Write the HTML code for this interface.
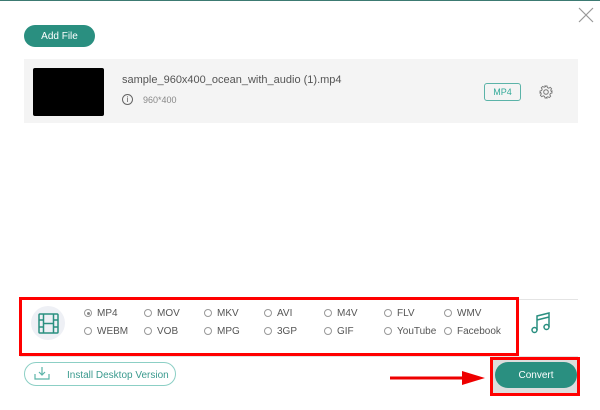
<!DOCTYPE html>
<html><head><style>
body{margin:0;width:600px;height:410px;background:#fff;position:relative;overflow:hidden;font-family:"Liberation Sans",sans-serif;}
.a{position:absolute}
.btn{display:flex;align-items:center;justify-content:center}
.r{position:absolute;font-size:10px;color:#555;}
.r i{display:inline-block;width:8px;height:8px;border:1px solid #999;border-radius:50%;vertical-align:-1px;margin-right:5px;box-sizing:border-box;position:relative}
.r i.on::after{content:"";position:absolute;left:1.5px;top:1.5px;width:3px;height:3px;border-radius:50%;background:#888}
</style></head><body>
<div class="a" style="left:0;top:0;width:600px;height:1px;background:#3c7a72"></div>
<svg class="a" style="left:578px;top:7px" width="16" height="16"><path d="M1 1L15 15M15 1L1 15" stroke="#999" stroke-width="1.2"/></svg>
<div class="a btn" style="left:24px;top:25px;width:71px;height:22px;border-radius:11px;background:#2a8f80;color:#fff;font-size:10px">Add File</div>
<div class="a" style="left:24px;top:59px;width:554px;height:64px;background:#f4f4f4"></div>
<div class="a" style="left:33px;top:68px;width:71px;height:48px;background:#000;border-radius:2px"></div>
<div class="a" style="left:122px;top:74px;font-size:11px;color:#555">sample_960x400_ocean_with_audio (1).mp4</div>
<div class="a" style="left:122px;top:94px;width:9px;height:9px;border:1px solid #666;border-radius:50%;font-size:8px;line-height:9px;text-align:center;color:#555">i</div>
<div class="a" style="left:143px;top:95px;font-size:9px;color:#888">960*400</div>
<div class="a btn" style="left:484px;top:83px;width:37px;height:18px;border:1px solid #5bb3a8;border-radius:3px;box-sizing:border-box;font-size:9px;color:#3a9">MP4</div>
<svg class="a" style="left:539px;top:85px" width="14" height="14" viewBox="0 0 14 14"><circle cx="7" cy="7" r="2.3" fill="none" stroke="#777"/><path d="M6 1h2l.4 1.6 1.4.6 1.4-.9 1.4 1.4-.9 1.4.6 1.4L13 6v2l-1.6.4-.6 1.4.9 1.4-1.4 1.4-1.4-.9-1.4.6L8 13H6l-.4-1.6-1.4-.6-1.4.9-1.4-1.4.9-1.4-.6-1.4L1 8V6l1.6-.4.6-1.4-.9-1.4 1.4-1.4 1.4.9 1.4-.6z" fill="none" stroke="#777" stroke-width=".9"/></svg>
<div class="a" style="left:20px;top:299px;width:558px;height:1px;background:#e4e4e4"></div>
<div class="a" style="left:20px;top:356px;width:558px;height:1px;background:#e4e4e4"></div>
<div class="a" style="left:31px;top:306px;width:34px;height:34px;border-radius:50%;background:#eef0f5"></div>
<svg class="a" style="left:38px;top:313px" width="21" height="21" viewBox="0 0 21 21"><g fill="none" stroke="#2a8f80" stroke-width="1.5"><rect x="1" y="1" width="19" height="19" rx="1"/><path d="M5.5 1v19M15.5 1v19M1 7h4.5M1 14h4.5M15.5 7H20M15.5 14H20M5.5 10.5h10"/></g></svg>
<div class="a" style="left:19px;top:297px;width:494px;height:53px;border:3px solid #f00"></div>
<div class="r" style="left:84px;top:308px"><i class="on"></i>MP4</div>
<div class="r" style="left:144px;top:308px"><i></i>MOV</div>
<div class="r" style="left:204px;top:308px"><i></i>MKV</div>
<div class="r" style="left:264px;top:308px"><i></i>AVI</div>
<div class="r" style="left:324px;top:308px"><i></i>M4V</div>
<div class="r" style="left:384px;top:308px"><i></i>FLV</div>
<div class="r" style="left:444px;top:308px"><i></i>WMV</div>
<div class="r" style="left:84px;top:326px"><i></i>WEBM</div>
<div class="r" style="left:144px;top:326px"><i></i>VOB</div>
<div class="r" style="left:204px;top:326px"><i></i>MPG</div>
<div class="r" style="left:264px;top:326px"><i></i>3GP</div>
<div class="r" style="left:324px;top:326px"><i></i>GIF</div>
<div class="r" style="left:384px;top:326px"><i></i>YouTube</div>
<div class="r" style="left:444px;top:326px"><i></i>Facebook</div>
<svg class="a" style="left:531px;top:312px" width="20" height="22" viewBox="0 0 20 22"><g fill="none" stroke="#2a8f80" stroke-width="1.5"><path d="M6 18V4l12-3v14M6 8l12-3"/><circle cx="3.5" cy="18" r="2.5"/><circle cx="15.5" cy="15" r="2.5"/></g></svg>
<div class="a" style="left:24px;top:362px;width:152px;height:24px;border:1px solid #8ccfc5;border-radius:12px;box-sizing:border-box"></div>
<svg class="a" style="left:34px;top:366px" width="16" height="14" viewBox="0 0 16 14"><g fill="none" stroke="#5bb3a8" stroke-width="1.2"><path d="M8 1v8M5 6l3 3 3-3M1 8v5h14V8"/></g></svg>
<div class="a" style="left:67px;top:369px;font-size:10px;color:#3a9a8e;margin-top:1px">Install Desktop Version</div>
<svg class="a" style="left:388px;top:370px" width="100" height="16"><path d="M2 8H80" stroke="#e00" stroke-width="3"/><path d="M74 1L97 8L74 15Z" fill="#e00"/></svg>
<div class="a" style="left:490px;top:357px;width:84px;height:33px;border:3px solid #f00;background:#ddd"></div>
<div class="a btn" style="left:495px;top:362px;width:82px;height:26px;border-radius:13px;background:#2a8f80;color:#fff;font-size:10px">Convert</div>
</body></html>
